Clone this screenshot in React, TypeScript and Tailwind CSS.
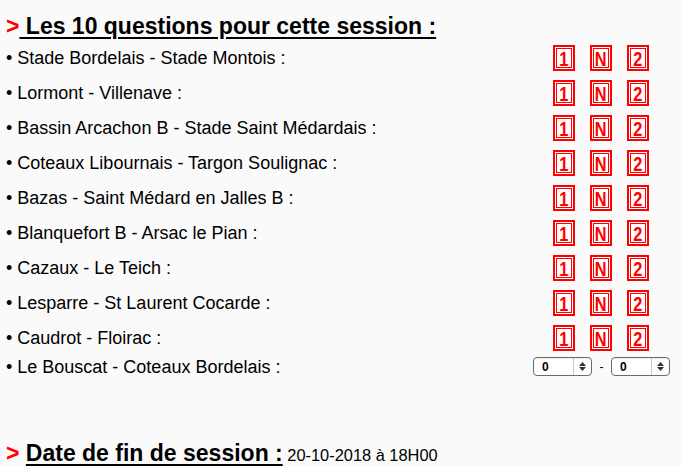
import React from "react";

const matches = [
  "Stade Bordelais - Stade Montois :",
  "Lormont - Villenave :",
  "Bassin Arcachon B - Stade Saint Médardais :",
  "Coteaux Libournais - Targon Soulignac :",
  "Bazas - Saint Médard en Jalles B :",
  "Blanquefort B - Arsac le Pian :",
  "Cazaux - Le Teich :",
  "Lesparre - St Laurent Cocarde :",
  "Caudrot - Floirac :",
];

function Pick({ label }: { label: string }) {
  return (
    <div className="w-[22px] h-[26px] border-2 border-[#ff0000] bg-white p-[1px]">
      <div className="w-full h-full border border-[#ff0000] flex items-center justify-center">
        <span className="text-[#ff0000] font-bold text-[21px] leading-none [transform:scaleX(0.78)]">{label}</span>
      </div>
    </div>
  );
}

function Sel() {
  return (
    <div className="w-[59px] h-[19px] border border-[#6b6b6b] rounded-[4px] bg-white flex items-center shadow-[inset_0_1px_1px_rgba(0,0,0,0.08)]">
      <span className="flex-1 pl-[8px] text-[12px] font-bold leading-none text-black">0</span>
      <span className="w-[18px] h-full border-l border-[#c8c8c8] flex flex-col items-center justify-center gap-[1px]">
        <svg width="7" height="4" viewBox="0 0 7 4"><path d="M0 4 L3.5 0 L7 4 Z" fill="#333" /></svg>
        <svg width="7" height="4" viewBox="0 0 7 4"><path d="M0 0 L3.5 4 L7 0 Z" fill="#333" /></svg>
      </span>
    </div>
  );
}

export default function App() {
  return (
    <div className="w-[681px] h-[466px] bg-[#fafafa] text-black overflow-hidden" style={{ fontFamily: '"Liberation Sans", Arial, sans-serif' }}>
      <div className="h-[40px] pl-[6px] pt-[13px] text-[23px] font-bold leading-[26px] whitespace-pre">
        <span className="text-[#ff0000]">&gt;</span>
        <span className="underline decoration-[2px] underline-offset-[3px]"> Les 10 questions pour cette session :</span>
      </div>
      {matches.map((m) => (
        <div key={m} className="h-[35px] flex items-center">
          <div className="flex-1 pl-[6px] text-[18px] leading-none">• {m}</div>
          <div className="w-[128px] flex gap-[15px] pt-[1px]">
            <Pick label="1" />
            <Pick label="N" />
            <Pick label="2" />
          </div>
        </div>
      ))}
      <div className="h-[23px] flex items-center">
        <div className="flex-1 pl-[6px] text-[18px] leading-none">• Le Bouscat - Coteaux Bordelais :</div>
        <div className="w-[148px] flex items-center">
          <Sel />
          <span className="w-[19px] text-center text-[12px]">-</span>
          <Sel />
        </div>
      </div>
      <div className="pt-[62px] pl-[6px] whitespace-pre leading-[26px]">
        <span className="text-[#ff0000] text-[23px] font-bold">&gt; </span>
        <span className="text-[23px] font-bold underline decoration-[2px] underline-offset-[3px]">Date de fin de session :</span>
        <span className="text-[16.4px]"> 20-10-2018 à 18H00</span>
      </div>
    </div>
  );
}
